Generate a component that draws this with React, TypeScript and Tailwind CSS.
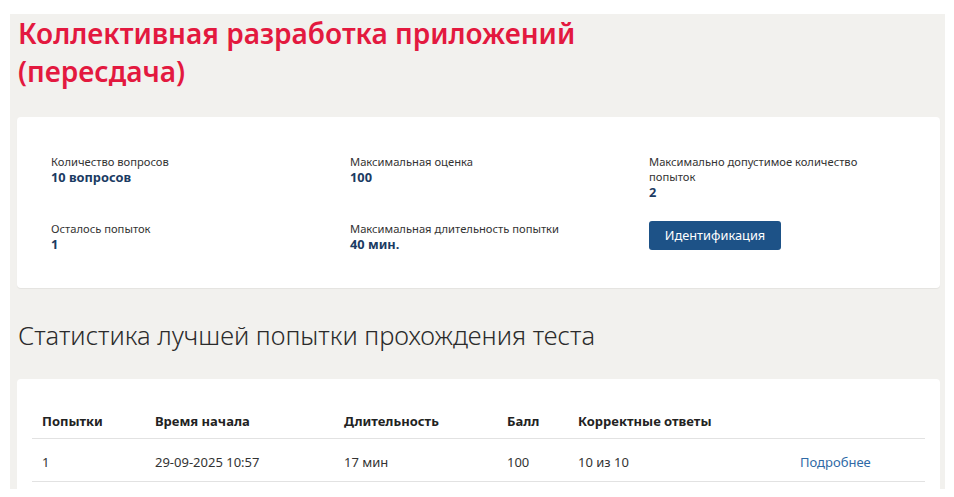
import React from "react";

const cols = ["w-[113px]", "w-[189px]", "w-[163px]", "w-[71px]", "w-[222px]", ""];

function Item({ label, value, labelClass = "" }: { label: string; value: string; labelClass?: string }) {
  return (
    <div className="flex flex-col">
      <div className={`text-[11.2px] leading-[15px] text-[#333] ${labelClass}`}>{label}</div>
      <div className="text-[12.8px] leading-[17px] font-bold text-[#1b3b63]">{value}</div>
    </div>
  );
}

export default function App() {
  const headers = ["Попытки", "Время начала", "Длительность", "Балл", "Корректные ответы", ""];
  const row = ["1", "29-09-2025 10:57", "17 мин", "100", "10 из 10"];
  return (
    <div className="w-[954px] h-[497px] bg-white pt-[14px] pl-[10px]" style={{ fontFamily: '"Noto Sans", "Open Sans", sans-serif' }}>
      <div className="w-[935px] h-[475px] bg-[#f2f1ee] overflow-hidden pl-[7px] pr-[5px]">
        <h1 className="pt-[0px] pl-[1px] text-[28px] leading-[38px] font-semibold text-[#e3193f]">
          Коллективная разработка приложений
          <br />
          (пересдача)
        </h1>
        <div className="mt-[27px] bg-white rounded-[4px] shadow-[0_1px_1px_rgba(0,0,0,0.06)] pl-[34px] pt-[37px] pb-[35px] grid grid-cols-[299px_299px_1fr] gap-y-[20px]">
          <Item label="Количество вопросов" value="10 вопросов" />
          <Item label="Максимальная оценка" value="100" />
          <Item label="Максимально допустимое количество попыток" value="2" labelClass="w-[215px]" />
          <Item label="Осталось попыток" value="1" />
          <Item label="Максимальная длительность попытки" value="40 мин." />
          <div>
            <button className="h-[29px] w-[132px] rounded-[3px] bg-[#1d5287] text-white text-[12.8px]">Идентификация</button>
          </div>
        </div>
        <h2 className="mt-[29px] pl-[1px] text-[25.5px] leading-[36px] font-light text-[#2b2b2b]">
          Статистика лучшей попытки прохождения теста
        </h2>
        <div className="mt-[26px] bg-white rounded-[4px] px-[15px] pt-[24px] pb-[20px]">
          <div className="flex border-b border-[#e2e2e2]">
            {headers.map((h, i) => (
              <div key={i} className={`${cols[i]} pl-[10px] pt-[8px] pb-[7px] text-[13px] leading-[20px] font-bold text-[#222] shrink-0`}>
                {h}
              </div>
            ))}
          </div>
          <div className="flex border-b border-[#e2e2e2]">
            {row.map((c, i) => (
              <div key={i} className={`${cols[i]} pl-[10px] pt-[13px] pb-[9px] text-[13px] leading-[20px] text-[#333] shrink-0`}>
                {c}
              </div>
            ))}
            <div className="pl-[10px] pt-[13px] pb-[9px] text-[13px] leading-[20px] text-[#2f6aa6]">Подробнее</div>
          </div>
        </div>
      </div>
    </div>
  );
}
